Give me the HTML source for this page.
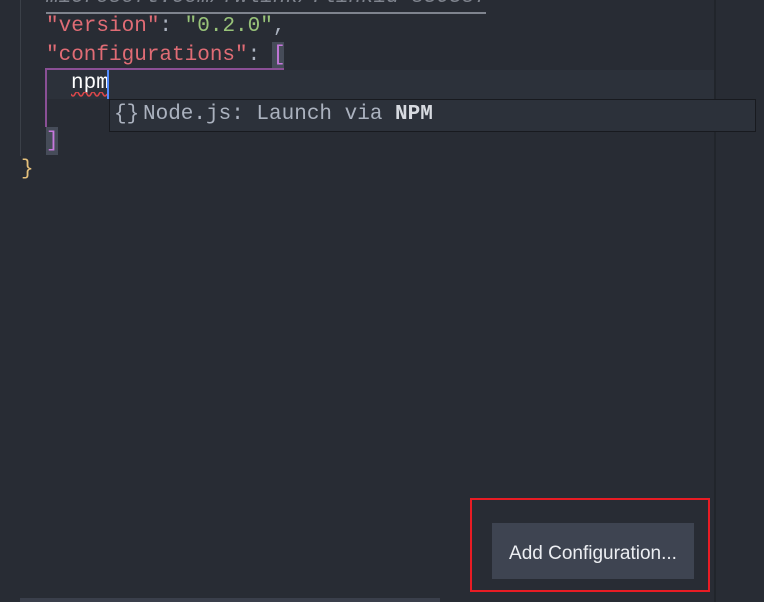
<!DOCTYPE html>
<html><head><meta charset="utf-8"><style>
html,body{margin:0;padding:0}
body{width:764px;height:602px;background:#282c34;position:relative;overflow:hidden;font-family:"Liberation Mono",monospace;font-size:21px}
.a{position:absolute;white-space:pre;line-height:28px}
.s{color:#e06c75}.g{color:#98c379}.p{color:#abb2bf}
</style></head><body>
<div style="position:absolute;left:20px;top:0;width:1px;height:156px;background:#3b4048"></div>
<div style="position:absolute;left:714px;top:0;width:2px;height:602px;background:#21252b"></div>
<div style="position:absolute;left:46px;top:70px;width:668px;height:29px;background:#2c313a"></div>
<div class="a" style="left:46px;top:-16px;color:#7f848e;font-style:italic">microsoft.com/fwlink/?linkid=830387</div>
<div style="position:absolute;left:46px;top:12px;width:440px;height:2px;background:#7f848e"></div>
<div class="a" style="left:46px;top:13px"><span class="s">"version"</span><span class="p">: </span><span class="g">"0.2.0"</span><span class="p">,</span></div>
<div style="position:absolute;left:272px;top:42px;width:12px;height:27px;background:#464c59"></div>
<div class="a" style="left:46px;top:42px"><span class="s">"configurations"</span><span class="p">: </span><span style="color:#c678dd">[</span></div>
<div style="position:absolute;left:46px;top:68px;width:238px;height:2px;background:#8a4f95"></div>
<div style="position:absolute;left:45px;top:68px;width:2px;height:59px;background:#8a4f95"></div>
<div class="a" style="left:71px;top:70px;color:#fff">npm</div>
<svg style="position:absolute;left:71px;top:92px" width="36" height="6"><path d="M0 2 Q2 6 4 2 T8 2 T12 2 T16 2 T20 2 T24 2 T28 2 T32 2 T36 2" stroke="#d9474a" fill="none" stroke-width="1.6"/></svg>
<div style="position:absolute;left:107px;top:70px;width:2px;height:29px;background:#528bff"></div>
<div style="position:absolute;left:46px;top:127px;width:12px;height:28px;background:#464c59"></div>
<div class="a" style="left:46px;top:128px;color:#c678dd">]</div>
<div class="a" style="left:21px;top:156px;color:#e5c07b">}</div>
<div style="position:absolute;left:109px;top:99px;width:645px;height:31px;background:#2c313a;border:1px solid #181a1f"></div>
<div class="a" style="left:114px;top:100px;color:#abb2bf;line-height:30px">{}</div>
<div class="a" style="left:143px;top:100px;color:#abb2bf;line-height:30px">Node.js: Launch via <b style="color:#d7dae0">NPM</b></div>
<div style="position:absolute;left:470px;top:498px;width:236px;height:90px;border:2px solid #e81c24"></div>
<div style="position:absolute;left:492px;top:523px;width:202px;height:56px;background:#3e4451;color:#eceef2;font-family:'Liberation Sans',sans-serif;font-size:19px;line-height:62px;text-align:center">Add Configuration...</div>
<div style="position:absolute;left:20px;top:598px;width:420px;height:4px;background:#3a3f4b"></div>
</body></html>
